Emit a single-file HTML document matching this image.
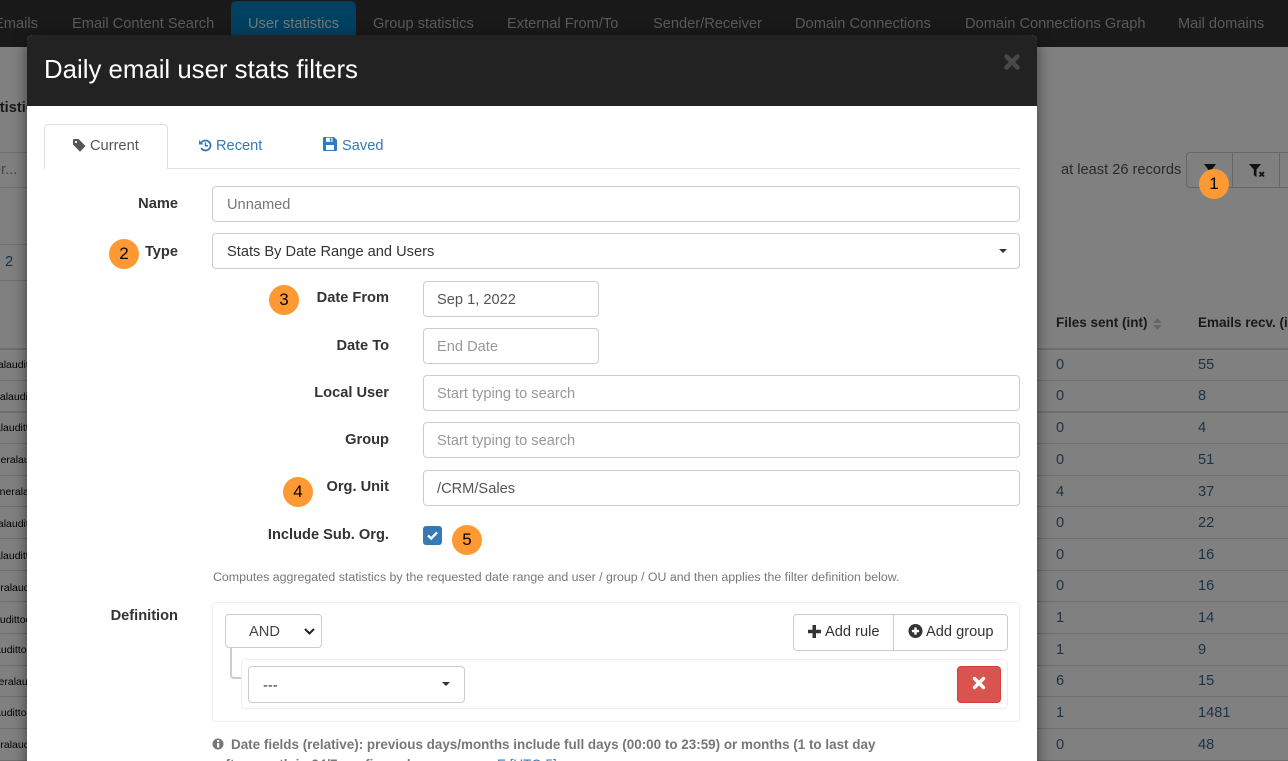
<!DOCTYPE html>
<html><head><meta charset="utf-8"><title>Daily email user stats filters</title>
<style>
html,body{margin:0;padding:0;width:1288px;height:761px;overflow:hidden;background:#808080;font-family:"Liberation Sans",sans-serif;font-size:14.63px;color:#333}
#p{position:absolute;left:0;top:0;width:1288px;height:761px;overflow:hidden;background:#808080}
.a{position:absolute;white-space:nowrap}
.nav{color:#5a5a5a;top:15px;line-height:18px}
.ln{position:absolute;height:1px;background:#6e6e6e}
.n{position:absolute;color:#1c3346;line-height:16px}
.left{position:absolute;left:0;width:27px;height:14px;overflow:hidden;font-size:10.5px;line-height:14px;color:#000;white-space:nowrap;text-align:left}
.lbl{position:absolute;font-weight:700;color:#333;text-align:right;line-height:20px;white-space:nowrap}
.inp{position:absolute;box-sizing:border-box;border:1px solid #ccc;border-radius:4px;background:#fff;padding:0 14px 0 14px;height:36px;line-height:35.500px;color:#555;white-space:nowrap}
.inp span{position:relative;top:1px}
.c2{padding-left:13px}
.ph{color:#999}
.dot{position:absolute;width:30px;height:30px;border-radius:50%;background:#ff9933;color:#000;font-size:17px;line-height:30px;text-align:center}
</style></head><body><div id="p">
<div class="a" style="left:0;top:0;width:1288px;height:47px;background:#191919"></div>
<div class="a" style="left:231px;top:1px;width:125px;height:46px;background:#004060;border-radius:5px 5px 0 0"></div>
<div class="a nav" style="left:-6px">Emails</div>
<div class="a nav" style="left:72px">Email Content Search</div>
<div class="a nav" style="left:248px;color:#777">User statistics</div>
<div class="a nav" style="left:373px">Group statistics</div>
<div class="a nav" style="left:507px">External From/To</div>
<div class="a nav" style="left:653px">Sender/Receiver</div>
<div class="a nav" style="left:795px">Domain Connections</div>
<div class="a nav" style="left:965px">Domain Connections Graph</div>
<div class="a nav" style="left:1178px">Mail domains</div>

<!-- background page -->
<div class="a" style="left:-23px;top:100px;font-weight:700;color:#1a1a1a">Statistics</div>
<div class="ln" style="left:0;top:152px;width:27px"></div>
<div class="ln" style="left:0;top:187px;width:27px"></div>
<div class="ln" style="left:0;top:244px;width:27px"></div>
<div class="ln" style="left:0;top:280px;width:27px"></div>
<div class="a" style="left:-25px;top:162px;color:#444">User...</div>
<div class="a" style="left:5px;top:254px;color:#1c3346">2</div>

<div class="ln" style="left:0;top:348px;width:1288px;height:2px"></div>
<div class="ln" style="left:0;top:380px;width:1288px"></div>
<div class="ln" style="left:0;top:411px;width:1288px;height:2px"></div>
<div class="ln" style="left:0;top:443px;width:1288px"></div>
<div class="ln" style="left:0;top:475px;width:1288px"></div>
<div class="ln" style="left:0;top:506px;width:1288px"></div>
<div class="ln" style="left:0;top:538px;width:1288px"></div>
<div class="ln" style="left:0;top:570px;width:1288px"></div>
<div class="ln" style="left:0;top:601px;width:1288px"></div>
<div class="ln" style="left:0;top:633px;width:1288px"></div>
<div class="ln" style="left:0;top:665px;width:1288px"></div>
<div class="ln" style="left:0;top:696px;width:1288px"></div>
<div class="ln" style="left:0;top:728px;width:1288px"></div>
<div class="ln" style="left:0;top:760px;width:1288px"></div>

<div class="left" style="top:358px;text-indent:-29px">generalaudittool</div>
<div class="left" style="top:390px;text-indent:-27px">generalaudittool</div>
<div class="left" style="top:421px;text-indent:-32px">generalaudittool</div>
<div class="left" style="top:453px;text-indent:-17px">generalaudittool</div>
<div class="left" style="top:485px;text-indent:-12px">generalaudittool</div>
<div class="left" style="top:517px;text-indent:-29px">generalaudittool</div>
<div class="left" style="top:549px;text-indent:-32px">generalaudittool</div>
<div class="left" style="top:581px;text-indent:-23px">generalaudittool</div>
<div class="left" style="top:613px;text-indent:-41px">generalaudittool</div>
<div class="left" style="top:643px;text-indent:-40px">generalaudittool</div>
<div class="left" style="top:675px;text-indent:-19px">generalaudittool</div>
<div class="left" style="top:706px;text-indent:-40px">generalaudittool</div>
<div class="left" style="top:738px;text-indent:-23px">generalaudittool</div>

<div class="a" style="left:1056px;top:315px;font-weight:700;font-size:13.5px;color:#1a1a1a">Files sent (int)</div>
<svg class="a" style="left:1152px;top:317px" width="11" height="14" viewBox="0 0 11 14"><path d="M5.500 1L10 6H1zM5.500 13L1 8h9z" fill="#666"/></svg>
<div class="a" style="left:1198px;top:315px;font-weight:700;font-size:13.5px;color:#1a1a1a">Emails recv. (int)</div>

<div class="n" style="left:1056px;top:357px">0</div><div class="n" style="left:1198px;top:357px">55</div>
<div class="n" style="left:1056px;top:388px">0</div><div class="n" style="left:1198px;top:388px">8</div>
<div class="n" style="left:1056px;top:420px">0</div><div class="n" style="left:1198px;top:420px">4</div>
<div class="n" style="left:1056px;top:452px">0</div><div class="n" style="left:1198px;top:452px">51</div>
<div class="n" style="left:1056px;top:484px">4</div><div class="n" style="left:1198px;top:484px">37</div>
<div class="n" style="left:1056px;top:515px">0</div><div class="n" style="left:1198px;top:515px">22</div>
<div class="n" style="left:1056px;top:547px">0</div><div class="n" style="left:1198px;top:547px">16</div>
<div class="n" style="left:1056px;top:578px">0</div><div class="n" style="left:1198px;top:578px">16</div>
<div class="n" style="left:1056px;top:610px">1</div><div class="n" style="left:1198px;top:610px">14</div>
<div class="n" style="left:1056px;top:642px">1</div><div class="n" style="left:1198px;top:642px">9</div>
<div class="n" style="left:1056px;top:673px">6</div><div class="n" style="left:1198px;top:673px">15</div>
<div class="n" style="left:1056px;top:705px">1</div><div class="n" style="left:1198px;top:705px">1481</div>
<div class="n" style="left:1056px;top:737px">0</div><div class="n" style="left:1198px;top:737px">48</div>

<div class="a" style="left:1061px;top:162px;color:#2a2a2a;line-height:16px">at least 26 records</div>
<div class="a" style="left:1186px;top:152px;width:120px;height:36px;box-sizing:border-box;border:1px solid #666;border-radius:4px 0 0 4px"></div>
<div class="a" style="left:1232px;top:152px;width:1px;height:36px;background:#666"></div>
<div class="a" style="left:1279px;top:152px;width:1px;height:36px;background:#666"></div>
<svg class="a" style="left:1203px;top:164px" width="14" height="12" viewBox="0 0 14 12"><path d="M1 0h12L8.500 6v6L5.500 10V6z" fill="#111"/></svg>
<svg class="a" style="left:1249px;top:164px" width="17" height="13" viewBox="0 0 17 13"><path d="M0 0h12L7.500 5.500V13L4.800 11V5.500z" fill="#111"/><path d="M10.500 8l4.500 4.500M15 8l-4.500 4.500" stroke="#111" stroke-width="1.800"/></svg>

<!-- modal -->
<div class="a" style="left:27px;top:35px;width:1010px;height:740px;background:#fff;border-radius:6px 6px 0 0;box-shadow:0 5px 15px rgba(0,0,0,.5);overflow:hidden">
  <div style="height:71px;background:#222"></div>
</div>
<div class="a" style="left:44px;top:56px;font-size:25.8px;line-height:29px;color:#fff">Daily email user stats filters</div>
<svg class="a" style="left:1003px;top:53px" width="18" height="18" viewBox="0 0 18 18"><path d="M3.500 3.500l11 11M14.500 3.500l-11 11" stroke="#484848" stroke-width="4.500" stroke-linecap="round"/></svg>

<!-- tabs -->
<div class="a" style="left:44px;top:168px;width:976px;height:1px;background:#ddd"></div>
<div class="a" style="left:44px;top:124px;width:124px;height:45px;box-sizing:border-box;border:1px solid #ddd;border-bottom:0;border-radius:4px 4px 0 0;background:#fff"></div>
<svg class="a" style="left:73px;top:139px" width="13" height="13" viewBox="0 0 13 13"><path d="M0 1.200Q0 0 1.200 0H5.500L12.500 7 7 12.800 0 5.500z" fill="#555"/><circle cx="3" cy="3" r="1.100" fill="#fff"/></svg>
<div class="a" style="left:90px;top:138px;color:#555;line-height:17px">Current</div>
<svg class="a" style="left:199px;top:139px" width="13" height="13" viewBox="0 0 13 13"><path d="M2.500 3.500A5 5 0 1 1 2.200 9" fill="none" stroke="#337ab7" stroke-width="1.800"/><path d="M0 1l4.500 4.500H0z" fill="#337ab7"/><path d="M6.500 3.500v3.300h2.500" fill="none" stroke="#337ab7" stroke-width="1.500"/></svg>
<div class="a" style="left:216px;top:138px;color:#337ab7;line-height:17px">Recent</div>
<svg class="a" style="left:323px;top:137px" width="14" height="14" viewBox="0 0 14 14"><path d="M0 1q0-1 1-1h10l3 3v10q0 1-1 1H1q-1 0-1-1z" fill="#337ab7"/><rect x="3" y="0.800" width="6.500" height="4" fill="#fff"/><rect x="6.800" y="1.300" width="1.600" height="3" fill="#337ab7"/><rect x="3" y="8" width="8" height="5" fill="#fff"/></svg>
<div class="a" style="left:342px;top:138px;color:#337ab7;line-height:17px">Saved</div>

<!-- form -->
<div class="lbl" style="left:78px;width:100px;top:194px">Name</div>
<div class="inp" style="left:212px;top:186px;width:808px;color:#777"><span>Unnamed</span></div>
<div class="lbl" style="left:78px;width:100px;top:242px">Type</div>
<div class="inp" style="left:212px;top:233px;width:808px;color:#333"><span>Stats By Date Range and Users</span></div>
<div class="a" style="left:999px;top:249px;width:0;height:0;border:4px solid transparent;border-top-color:#333;border-bottom:0"></div>

<div class="lbl" style="left:239px;width:150px;top:288px">Date From</div>
<div class="inp c2" style="left:423px;top:281px;width:176px"><span>Sep 1, 2022</span></div>
<div class="lbl" style="left:239px;width:150px;top:336px">Date To</div>
<div class="inp ph c2" style="left:423px;top:328px;width:176px"><span>End Date</span></div>
<div class="lbl" style="left:239px;width:150px;top:383px">Local User</div>
<div class="inp ph c2" style="left:423px;top:375px;width:597px"><span>Start typing to search</span></div>
<div class="lbl" style="left:239px;width:150px;top:430px">Group</div>
<div class="inp ph c2" style="left:423px;top:422px;width:597px"><span>Start typing to search</span></div>
<div class="lbl" style="left:239px;width:150px;top:477px">Org. Unit</div>
<div class="inp c2" style="left:423px;top:470px;width:597px"><span>/CRM/Sales</span></div>
<div class="lbl" style="left:239px;width:150px;top:525px">Include Sub. Org.</div>
<div class="a" style="left:423px;top:526px;width:19px;height:19px;background:#337ab7;border-radius:3px"></div>
<svg class="a" style="left:423px;top:526px" width="19" height="19" viewBox="0 0 19 19"><path d="M5 9.500l3.200 3L14 6.500" fill="none" stroke="#fff" stroke-width="2.400"/></svg>
<div class="a" style="left:213px;top:570px;font-size:12.36px;line-height:14px;color:#777">Computes aggregated statistics by the requested date range and user / group / OU and then applies the filter definition below.</div>

<div class="lbl" style="left:78px;width:100px;top:606px">Definition</div>
<div class="a" style="left:212px;top:602px;width:808px;height:120px;box-sizing:border-box;border:1px solid #eee;border-radius:4px"></div>
<div class="a" style="left:225px;top:614px;width:97px;height:34px;box-sizing:border-box;border:1px solid #ccc;border-radius:4px;background:#fff;line-height:33px;padding-left:23px;color:#444"><span style="position:relative;top:1px">AND</span></div>
<svg class="a" style="left:304px;top:628px" width="11" height="7" viewBox="0 0 11 7"><path d="M1 1l4.500 4.500L10 1" fill="none" stroke="#222" stroke-width="2"/></svg>
<div class="a" style="left:230px;top:648px;width:11px;height:31px;box-sizing:border-box;border-left:2px solid #ccc;border-bottom:2px solid #ccc;border-radius:0 0 0 4px"></div>
<div class="a" style="left:241px;top:659px;width:767px;height:50px;box-sizing:border-box;border:1px solid #eee;border-radius:4px"></div>
<div class="inp" style="left:248px;top:666px;width:217px;height:37px;line-height:37px;padding-left:14px;color:#333"><span>---</span></div>
<div class="a" style="left:442px;top:682px;width:0;height:0;border:4px solid transparent;border-top-color:#333;border-bottom:0"></div>
<div class="a" style="left:793px;top:614px;width:215px;height:37px;box-sizing:border-box;border:1px solid #ccc;border-radius:4px;background:#fff"></div>
<div class="a" style="left:893px;top:614px;width:1px;height:37px;background:#ccc"></div>
<svg class="a" style="left:807px;top:624px" width="15" height="15" viewBox="0 0 15 15"><path d="M5.500 1h3.500v4.800H14v3.400H9V14H5.500V9.200H1V5.800h4.500z" fill="#333"/></svg>
<div class="a" style="left:825px;top:624px;color:#333;line-height:17px">Add rule</div>
<svg class="a" style="left:908px;top:624px" width="15" height="15" viewBox="0 0 15 15"><circle cx="7.500" cy="7" r="7" fill="#333"/><path d="M6.300 3.500h2.400v2.400h2.400v2.300H8.700v2.400H6.300V8.200H3.900V5.900h2.400z" fill="#fff"/></svg>
<div class="a" style="left:926px;top:624px;color:#333;line-height:17px">Add group</div>
<div class="a" style="left:957px;top:666px;width:44px;height:37px;box-sizing:border-box;background:#d9534f;border:1px solid #d43f3a;border-radius:4px"></div>
<svg class="a" style="left:972px;top:676px" width="14" height="14" viewBox="0 0 14 14"><path d="M2.500 2.500l9 9M11.500 2.500l-9 9" stroke="#fff" stroke-width="3.400" stroke-linecap="round"/></svg>

<svg class="a" style="left:212px;top:738px" width="12" height="12" viewBox="0 0 12 12"><circle cx="6" cy="6" r="5.500" fill="#777"/><rect x="5" y="2" width="2.200" height="2" fill="#fff"/><rect x="5" y="5" width="2.200" height="4.500" fill="#fff"/></svg>
<div class="a" style="left:231px;top:736px;font-weight:700;font-size:13.45px;line-height:17px;color:#777">Date fields (relative): previous days/months include full days (00:00 to 23:59) or months (1 to last day</div>
<div class="a" style="left:218px;top:756px;font-weight:700;font-size:13.45px;line-height:17px;color:#777">after month in 24/7 configured</div>
<div class="a" style="left:497px;top:756px;font-size:13.45px;line-height:17px;color:#337ab7">E [UTC-5] ↗</div>

<!-- markers -->
<div class="dot" style="left:1199px;top:169px">1</div>
<div class="dot" style="left:109px;top:239px">2</div>
<div class="dot" style="left:269px;top:285px">3</div>
<div class="dot" style="left:283px;top:477px">4</div>
<div class="dot" style="left:452px;top:525px">5</div>
</div></body></html>
